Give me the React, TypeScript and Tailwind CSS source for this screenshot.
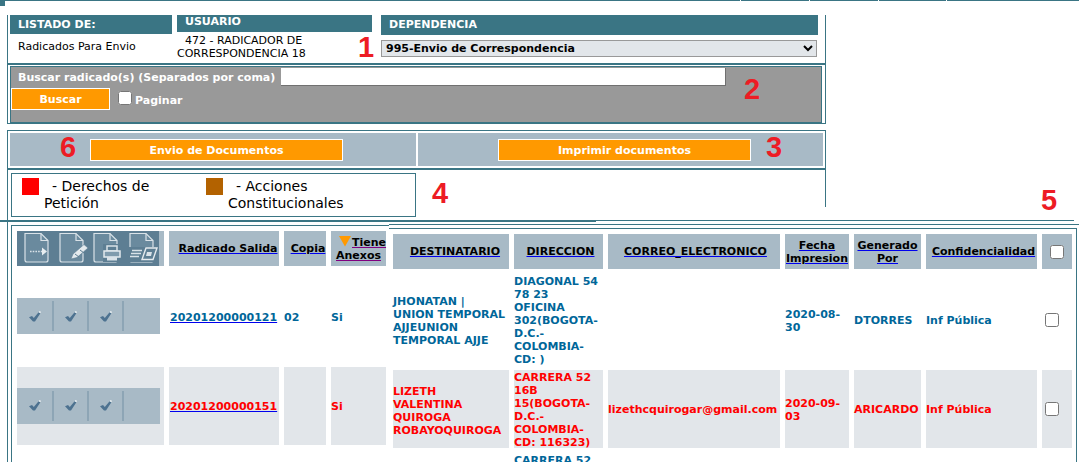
import React from 'react';

const font = '[font-family:"DejaVu_Sans",Verdana,sans-serif]';

const FileOutline = ({ x }: { x: number }) => (
  <g fill="#6a8a9e" stroke="#d9e2e8" strokeWidth="1.2">
    <path d={`M${x} 2.5 H${x + 16} L${x + 23} 9.5 V29 Q${x + 23} 31 ${x + 21} 31 H${x + 2} Q${x} 31 ${x} 29 Z`} />
    <path d={`M${x + 16} 2.5 V9.5 H${x + 23}`} fill="none" />
  </g>
);

const HeaderIcons = () => (
  <svg width="142" height="35" viewBox="0 0 142 35" className="block">
    <FileOutline x={8} />
    <path d="M13 20.5 H25" stroke="#d9e2e8" strokeWidth="1.5" strokeDasharray="1.6 1.1" fill="none" />
    <path d="M25 16.5 L30 20.5 L25 24.5 Z" fill="#e8eef1" />

    <FileOutline x={43} />
    <path d="M65 18 L72 11 V18 Z" fill="#5d7e93" />
    <path d="M54 28 L56 23 L67 13.5 L71 17 L60 26.5 Z" fill="#e4eaee" stroke="#5d7e93" strokeWidth="0.6" />
    <path d="M58 23 L62 26 M63 19 L67 22" stroke="#5d7e93" strokeWidth="1" />

    <FileOutline x={77} />
    <path d="M86 13 H104 V31 H86 Z" fill="#5d7e93" />
    <path d="M90 15 H100 V20 H90 Z" fill="none" stroke="#d9e2e8" strokeWidth="1.5" />
    <path d="M87 20 H103 V26 H87 Z" fill="#7f9bad" stroke="#e4eaee" strokeWidth="1.5" />
    <path d="M90 26 H100 V29.5 H90 Z" fill="#d9e2e8" />

    <FileOutline x={113} />
    <path d="M111 16 H142 V31 H111 Z" fill="#5d7e93" />
    <path d="M115 19.5 H125 M114 22.5 H124 M113 25.5 H122" stroke="#d9e2e8" strokeWidth="1.3" />
    <path d="M129 17 H140 L136 28.5 H125 Z" fill="#5d7e93" stroke="#e4eaee" strokeWidth="1.4" />
    <path d="M130 21 H135 L134 25 H129 Z" fill="#d9e2e8" />
  </svg>
);

const Check = () => (
  <svg width="12" height="11" viewBox="0 0 12 11" className="block">
    <path d="M0 6.2 L3 5 L4.8 7 L9.6 1.2 L11.4 2.2 L6 10.4 L4 10.4 Z" fill="#4d7290" />
    <path d="M9.6 1.2 L10.4 0 L12 0.8 L11.4 2.2 Z" fill="#e8eef1" />
  </svg>
);

const CheckStrip = () => (
  <div className="flex items-center w-[143px] h-[36px] mb-px bg-[#a8bac6]">
    <div className="flex items-center justify-center pl-px w-[37px] h-[30px] border-r-2 border-[#8da5b5]"><Check /></div>
    <div className="flex items-center justify-center pl-px w-[35px] h-[30px] border-r-2 border-[#8da5b5]"><Check /></div>
    <div className="flex items-center justify-center pl-px w-[35px] h-[30px] border-r-2 border-[#8da5b5]"><Check /></div>
  </div>
);

const Lines = ({ lines }: { lines: string[] }) => (
  <>
    {lines.map((l) => (
      <div key={l} className="whitespace-nowrap">{l}</div>
    ))}
  </>
);

const HeadCell = ({ children, className = '' }: { children: React.ReactNode; className?: string }) => (
  <div className={`flex items-center justify-center text-center bg-[#a8bac6] text-black font-bold underline decoration-[#0000ee] ${className}`}>
    {children}
  </div>
);

const rows = [
  {
    bg: '',
    text: 'text-[#006699]',
    radicado: '20201200000121',
    copia: '02',
    dest: ['JHONATAN |', 'UNION TEMPORAL', 'AJJEUNION', 'TEMPORAL AJJE'],
    dir: ['DIAGONAL 54', '78 23', 'OFICINA', '302(BOGOTA-', 'D.C.-', 'COLOMBIA-', 'CD: )'],
    correo: '',
    fecha: ['2020-08-', '30'],
    gen: 'DTORRES',
    destPad: 'pt-[2px]',
    linePad: 'pt-[2px]',
  },
  {
    bg: 'bg-[#e2e6ea]',
    text: 'text-[#ff0000]',
    radicado: '20201200000151',
    copia: '',
    dest: ['LIZETH', 'VALENTINA', 'QUIROGA', 'ROBAYOQUIROGA'],
    dir: ['CARRERA 52', '16B', '15(BOGOTA-', 'D.C.-', 'COLOMBIA-', 'CD: 116323)'],
    correo: 'lizethcquirogar@gmail.com',
    fecha: ['2020-09-', '03'],
    gen: 'ARICARDO',
    destPad: 'pt-[4px]',
    linePad: '',
  },
];

const numberClass = "absolute text-[29px] leading-[32px] font-bold text-[#ed1c24] [font-family:'Liberation_Sans',Arial,sans-serif]";

export default function App() {
  return (
    <div className={`relative w-[1079px] h-[462px] overflow-hidden bg-white text-[11px] leading-[13px] text-black ${font}`}>
      {/* top rule */}
      <div className="flex gap-px h-px">
        <div className="w-[740px] bg-[#3a7584]" />
        <div className="w-[68px] bg-[#3a7584]" />
        <div className="w-[68px] bg-[#3a7584]" />
        <div className="w-[67px] bg-[#3a7584]" />
        <div className="flex-1 bg-[#3a7584]" />
      </div>
      <div className="absolute left-0 top-0 w-[5px] h-[6px] bg-[#3a7584]" />

      {/* filter box */}
      <div className="ml-[7px] mt-[14px] w-[819px] h-[109px] border-x border-b border-[#3a7584]">
        <div className="flex items-start gap-[5px] h-[48px] pl-[2px]">
          <div className="w-[162px]">
            <div className="h-[19px] bg-[#3a7584] pl-[8px] pt-[3px] font-bold text-white">LISTADO DE:</div>
            <div className="pl-[8px] pt-[6px]">Radicados Para Envio</div>
          </div>
          <div className="w-[195px]">
            <div className="h-[17px] bg-[#3a7584] pl-[8px] font-bold text-white">USUARIO</div>
            <div className="pt-[2px]">
              <div className="pl-[8px]">472 - RADICADOR DE</div>
              <div>CORRESPONDENCIA 18</div>
            </div>
          </div>
          <div className="w-[437px] ml-[4px]">
            <div className="h-[20px] bg-[#3a7584] pl-[8px] pt-[3px] font-bold text-white">DEPENDENCIA</div>
            <select className="mt-[5px] block w-[436px] h-[17px] bg-[#e2e6ea] border border-[#999999] font-bold text-[11px] text-black">
              <option>995-Envio de Correspondencia</option>
            </select>
          </div>
        </div>
        <div className="h-[2px] bg-[#3a7584]" />
        <div className="ml-[2px] mt-px w-[812px] h-[57px] border border-[#3a7584] bg-[#999999]">
          <div className="flex items-center h-[19px] pt-px pl-[7px] font-bold text-white">
            <span className="w-[263px] whitespace-nowrap">Buscar radicado(s) (Separados por coma)</span>
            <input className="w-[445px] h-[18px] bg-white border-r border-b border-[#707070]" />
          </div>
          <div className="flex items-center mt-[2px] font-bold text-white">
            <button className="w-[99px] h-[22px] pt-px bg-[#ff9900] border border-white font-bold">Buscar</button>
            <input type="checkbox" className="ml-[8px] mb-[3px] w-[14px] h-[14px]" />
            <span className="ml-[3px] pt-[2px]">Paginar</span>
          </div>
        </div>
      </div>

      {/* actions and legend */}
      <div className="ml-[7px] mt-[6px] w-[819px] h-[90px] border-l border-t border-[#3a7584]">
        <div className="border-r border-[#3a7584]">
          <div className="flex gap-[2px] pl-[2px] pt-[2px] h-[35px]">
            <div className="flex items-center w-[406px] h-[33px] bg-[#a8bac6] pl-[80px]">
              <button className="w-[253px] h-[22px] pt-px bg-[#ff9900] border border-white text-white font-bold">Envio de Documentos</button>
            </div>
            <div className="flex items-center w-[405px] h-[33px] bg-[#a8bac6] pl-[80px]">
              <button className="w-[253px] h-[22px] pt-px bg-[#ff9900] border border-white text-white font-bold">Imprimir documentos</button>
            </div>
          </div>
          <div className="mt-[2px] h-[2px] bg-[#3a7584]" />
          <div className="h-[37px] pl-[3px] pt-[3px]">
            <div className="flex w-[405px] h-[44px] bg-white border border-[#3a7584] text-[14px] leading-[17px] pt-[4px]">
              <div className="w-[184px] pl-[32px] -indent-[22px]">
                <span className="inline-block align-[-4px] w-[17px] h-[17px] mr-[13px] bg-[#ff0000]" />- Derechos de Petición
              </div>
              <div className="w-[184px] pl-[32px] -indent-[22px] whitespace-nowrap">
                <span className="inline-block align-[-4px] w-[17px] h-[17px] mr-[13px] bg-[#b36200]" />- Acciones<br />Constitucionales
              </div>
            </div>
          </div>
        </div>
      </div>

      {/* divider rules */}
      <div className="flex items-start">
        <div className="w-[596px] h-[2px] bg-[#3a7584]" />
        <div className="w-[478px] h-px bg-[#3a7584]" />
      </div>

      {/* results: the left and right halves sit 3px apart vertically */}
      <div className="flex ml-[7px] h-[240px] border-l border-[#3a7584]">
        <div className="mt-[3px] ml-[3px] w-[378px] pl-[5px] pt-[5px] border-l border-t border-[#3a7584]">
          <div className="grid grid-cols-[147px_110px_42px_55px] grid-rows-[35px_95px_78px] gap-x-[5px] gap-y-[3px]">
            <div className="bg-[#a8bac6]">
              <div className="w-[142px] h-[35px] bg-[#5d7e93]"><HeaderIcons /></div>
            </div>
            <HeadCell className="pl-[8px]">Radicado Salida</HeadCell>
            <HeadCell className="pl-[6px]">Copia</HeadCell>
            <div className="bg-[#a8bac6] pl-[5px] pt-[5px] font-bold whitespace-nowrap">
              <div className="flex items-start">
                <svg width="16" height="11" viewBox="0 0 16 11" className="block shrink-0">
                  <path d="M3 0 H15 L9 10.5 Z" fill="#ff9900" />
                </svg>
                <span className="underline decoration-[#800080]">Tiene</span>
              </div>
              <div className="underline decoration-[#800080]">Anexos</div>
            </div>
            {rows.map((r) => (
              <React.Fragment key={r.radicado}>
                <div className={`flex items-center ${r.bg}`}><CheckStrip /></div>
                <div className={`flex items-center pl-px font-bold ${r.linePad} ${r.bg} ${r.text}`}>
                  <span className="underline decoration-[#0000ee]">{r.radicado}</span>
                </div>
                <div className={`flex items-center font-bold ${r.linePad} ${r.bg} ${r.text}`}>{r.copia}</div>
                <div className={`flex items-center font-bold ${r.linePad} ${r.bg} ${r.text}`}>Si</div>
              </React.Fragment>
            ))}
          </div>
        </div>

        <div className="mt-[2px] w-[690px]">
          <div className="h-px bg-[#3a7584]" />
          <div className="mt-[3px] w-[688px] h-[240px] pl-[4px] pt-[5px] border-t border-r border-[#3a7584]">
            <div className="grid grid-cols-[116px_89px_172px_64px_67px_111px_30px] grid-rows-[35px_95px_78px_20px] gap-x-[5px] gap-y-[3px]">
              <HeadCell className="pl-[8px]">DESTINATARIO</HeadCell>
              <HeadCell className="pl-[4px]">DIRECCION</HeadCell>
              <HeadCell className="pl-[3px]">CORREO_ELECTRONICO</HeadCell>
              <HeadCell>Fecha<br />Impresion</HeadCell>
              <HeadCell>Generado<br />Por</HeadCell>
              <HeadCell className="pl-[4px]">Confidencialidad</HeadCell>
              <div className="flex items-center justify-center bg-[#a8bac6]">
                <input type="checkbox" className="w-[14px] h-[14px]" />
              </div>
              {rows.map((r) => (
                <React.Fragment key={r.radicado}>
                  <div className={`flex flex-col justify-center font-bold ${r.destPad} ${r.bg} ${r.text}`}><Lines lines={r.dest} /></div>
                  <div className={`flex flex-col justify-center pt-[2px] font-bold ${r.bg} ${r.text}`}><Lines lines={r.dir} /></div>
                  <div className={`flex items-center font-bold whitespace-nowrap ${r.linePad} ${r.bg} ${r.text}`}>{r.correo}</div>
                  <div className={`flex flex-col justify-center pt-[2px] font-bold ${r.bg} ${r.text}`}><Lines lines={r.fecha} /></div>
                  <div className={`flex items-center font-bold ${r.linePad} ${r.bg} ${r.text}`}>{r.gen}</div>
                  <div className={`flex items-center font-bold ${r.linePad} ${r.bg} ${r.text}`}>Inf Pública</div>
                  <div className={`flex items-center pl-[3px] ${r.bg}`}>
                    <input type="checkbox" className="w-[14px] h-[14px]" />
                  </div>
                </React.Fragment>
              ))}
              <div className="col-start-2 pt-[3px] font-bold text-[#006699] whitespace-nowrap">CARRERA 52</div>
            </div>
          </div>
        </div>
      </div>

      {/* red callout numbers drawn over the capture */}
      <span className={`${numberClass} left-[358px] top-[31px]`}>1</span>
      <span className={`${numberClass} left-[744px] top-[73px]`}>2</span>
      <span className={`${numberClass} left-[766px] top-[131px]`}>3</span>
      <span className={`${numberClass} left-[432px] top-[177px]`}>4</span>
      <span className={`${numberClass} left-[1041px] top-[184px]`}>5</span>
      <span className={`${numberClass} left-[60px] top-[131px]`}>6</span>
    </div>
  );
}
